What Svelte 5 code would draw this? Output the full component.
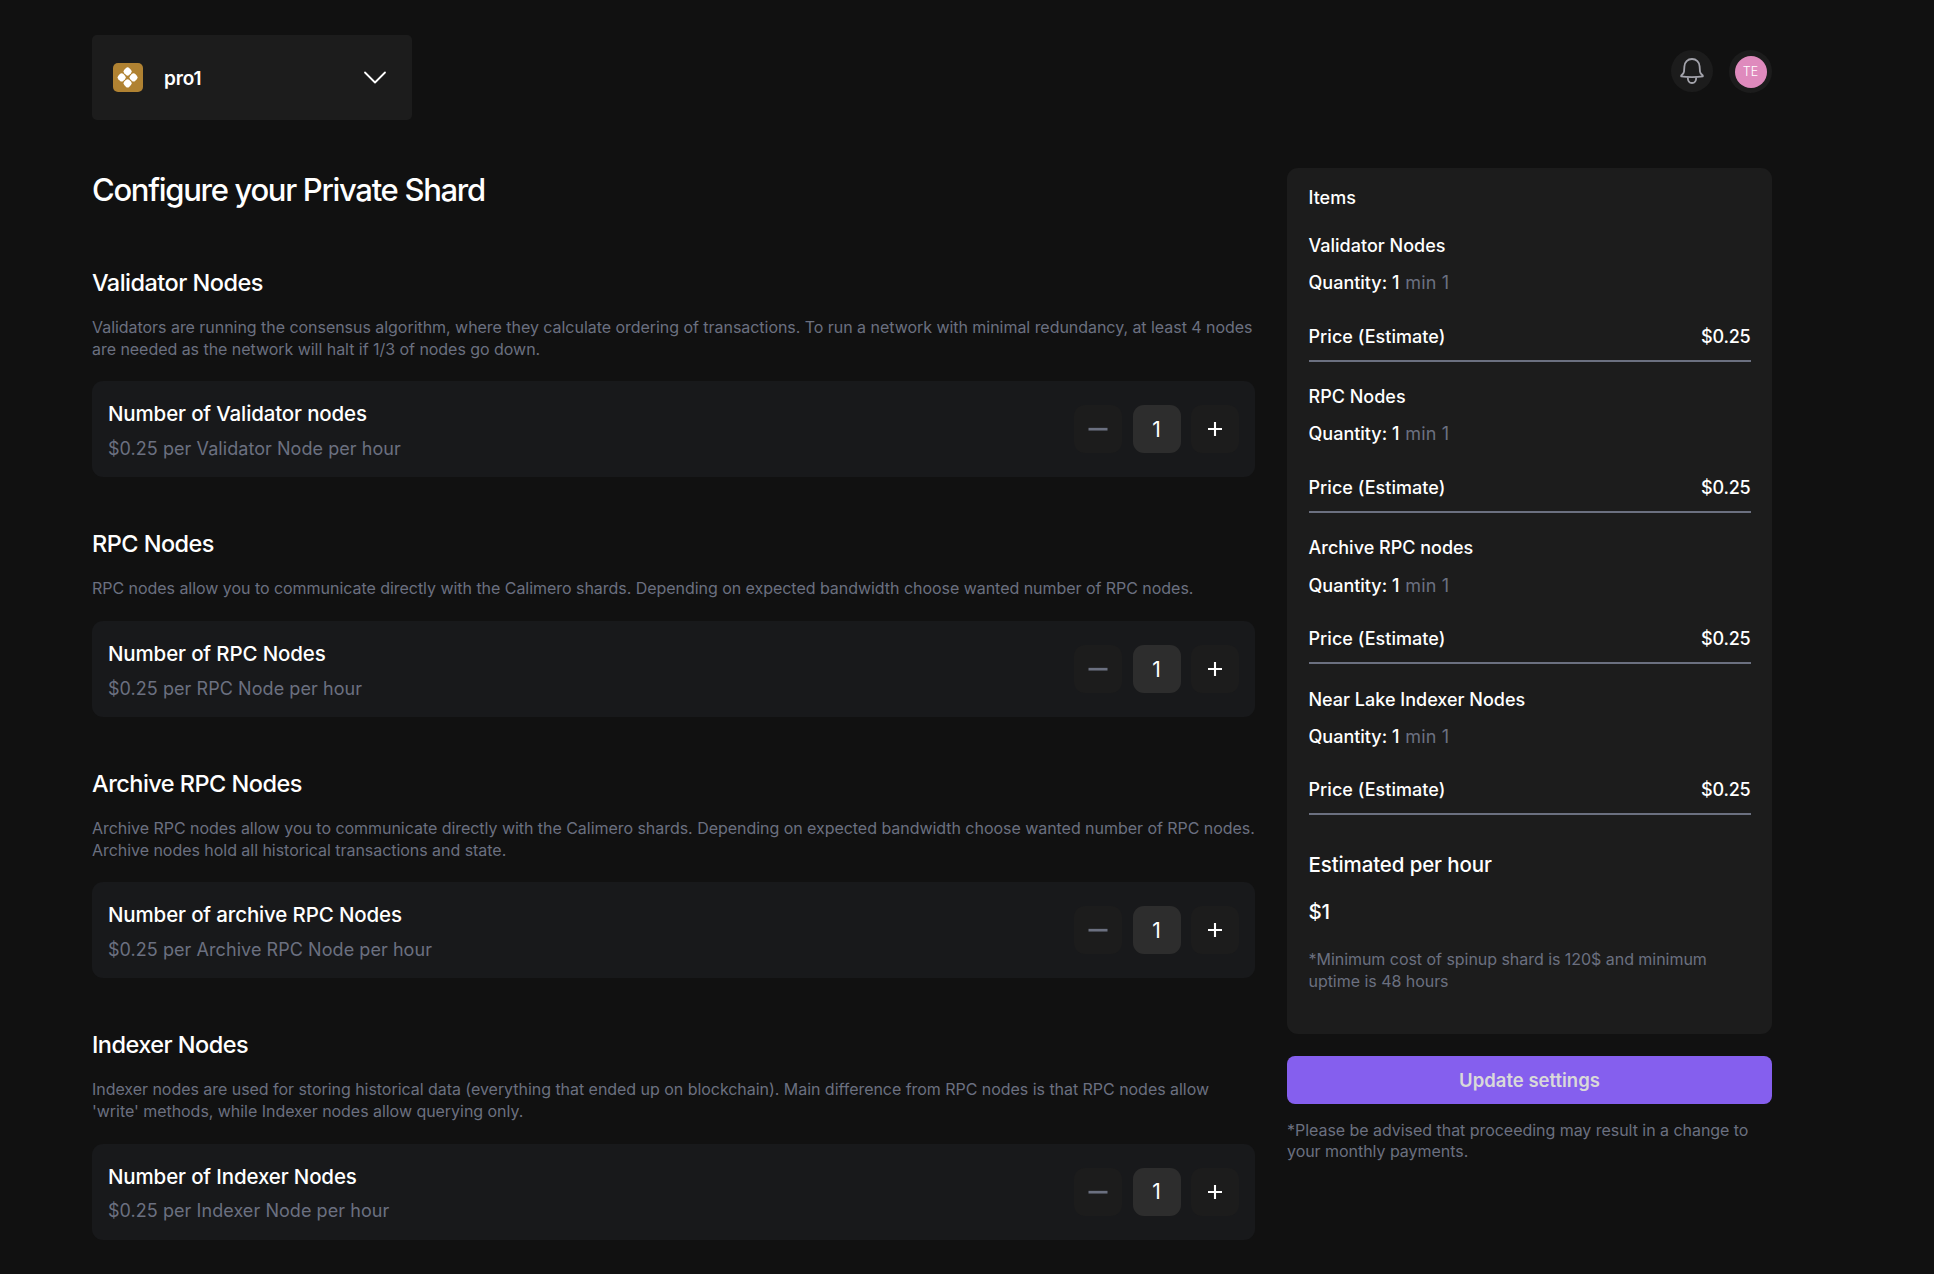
<script>
  const sections = [
    {
      title: 'Validator Nodes',
      text: 'Validators are running the consensus algorithm, where they calculate ordering of transactions. To run a network with minimal redundancy, at least 4 nodes are needed as the network will halt if 1/3 of nodes go down.',
      label: 'Number of Validator nodes',
      unit: 'Validator Node'
    },
    {
      title: 'RPC Nodes',
      text: 'RPC nodes allow you to communicate directly with the Calimero shards. Depending on expected bandwidth choose wanted number of RPC nodes.',
      label: 'Number of RPC Nodes',
      unit: 'RPC Node'
    },
    {
      title: 'Archive RPC Nodes',
      text: 'Archive RPC nodes allow you to communicate directly with the Calimero shards. Depending on expected bandwidth choose wanted number of RPC nodes. Archive nodes hold all historical transactions and state.',
      label: 'Number of archive RPC Nodes',
      unit: 'Archive RPC Node'
    },
    {
      title: 'Indexer Nodes',
      text: "Indexer nodes are used for storing historical data (everything that ended up on blockchain). Main difference from RPC nodes is that RPC nodes allow 'write' methods, while Indexer nodes allow querying only.",
      label: 'Number of Indexer Nodes',
      unit: 'Indexer Node'
    }
  ];
  const names = ['Validator Nodes', 'RPC Nodes', 'Archive RPC nodes', 'Near Lake Indexer Nodes'];
  const price = 0.25;
  const min = 1;
  let counts = $state([1, 1, 1, 1]);
  let total = $derived(counts.reduce((sum, n) => sum + n * price, 0));

  function change(i, by) {
    counts[i] = Math.max(min, counts[i] + by);
  }
</script>

<div class="page">
  <header>
    <button class="selector">
      <svg class="logo" viewBox="0 0 30 29">
        <rect width="30" height="29" rx="5" fill="#b08232" />
        <g fill="#fff" transform="translate(14.6 14.4) rotate(45)">
          <rect x="-7.8" y="-7.8" width="7.2" height="7.2" rx="2.5" />
          <rect x="0.6" y="-7.8" width="7.2" height="7.2" rx="2.5" />
          <rect x="-7.8" y="0.6" width="7.2" height="7.2" rx="2.5" />
          <rect x="0.6" y="0.6" width="7.2" height="7.2" rx="2.5" />
        </g>
      </svg>
      <span class="name">pro1</span>
      <svg class="chevron" viewBox="0 0 24 14">
        <path d="M2 1.5 12 11.5 22 1.5" fill="none" stroke="#fff" stroke-width="1.8" stroke-linecap="round" stroke-linejoin="round" />
      </svg>
    </button>
    <div class="actions">
      <button class="round" aria-label="Notifications">
        <svg class="bell" viewBox="0 0 24 26" fill="none" stroke="#a3a3ab" stroke-width="1.8" stroke-linejoin="round">
          <path d="M12 1C7.6 1 4.6 4.2 4.4 8.4L4 13.6C3.8 15.4 2.4 16.4 1.2 17.6V18.4C4 18.9 8 19.2 12 19.2S20 18.9 22.8 18.4V17.6C21.6 16.4 20.2 15.4 20 13.6L19.6 8.4C19.4 4.2 16.4 1 12 1Z" />
          <path d="M7.8 19.4C7.8 22.8 9.6 25 12 25S16.2 22.8 16.2 19.4" />
        </svg>
      </button>
      <div class="round"><span class="avatar">TE</span></div>
    </div>
  </header>

  <main>
    <div class="config">
      <h1>Configure your Private Shard</h1>
      {#each sections as s, i}
        <section>
          <h2>{s.title}</h2>
          <p class="note">{s.text}</p>
          <div class="card">
            <div class="info">
              <h3>{s.label}</h3>
              <p>${price} per {s.unit} per hour</p>
            </div>
            <div class="stepper">
              <button aria-label="Decrease" onclick={() => change(i, -1)}>
                <svg viewBox="0 0 20 20"><path d="M.5 10.2H19.5" stroke="#6b7080" stroke-width="2.7" /></svg>
              </button>
              <span class="count">{counts[i]}</span>
              <button aria-label="Increase" onclick={() => change(i, 1)}>
                <svg viewBox="0 0 20 20"><path d="M3 10H17M10 3V17" stroke="#fff" stroke-width="2.1" /></svg>
              </button>
            </div>
          </div>
        </section>
      {/each}
    </div>

    <aside>
      <div class="summary">
        <p class="heading">Items</p>
        {#each names as name, i}
          <div class="item">
            <p>{name}</p>
            <p class="quantity">Quantity: {counts[i]} <span>min {min}</span></p>
            <div class="price">
              <span>Price (Estimate)</span>
              <span class="amount">${counts[i] * price}</span>
            </div>
          </div>
        {/each}
        <p class="total">Estimated per hour</p>
        <p class="total sum">${total}</p>
        <p class="note">*Minimum cost of spinup shard is 120$ and minimum uptime is 48 hours</p>
      </div>
      <button class="update">Update settings</button>
      <p class="note advice">*Please be advised that proceeding may result in a change to your monthly payments.</p>
    </aside>
  </main>
</div>

<style>
  :global(body) {
    background: #111;
  }
  .page {
    box-sizing: border-box;
    width: 1934px;
    height: 1274px;
    overflow: hidden;
    padding: 35px 162px 0 92px;
    background: #111;
    color: #fff;
    font-family: Inter, 'Liberation Sans', sans-serif;
  }
  h1, h2, h3, p {
    margin: 0;
    font-weight: 500;
  }
  button {
    border: 0;
    padding: 0;
    font-family: inherit;
    color: inherit;
    cursor: pointer;
  }
  svg {
    display: block;
  }
  header {
    display: flex;
    justify-content: space-between;
    align-items: flex-start;
    height: 133px;
  }
  .selector {
    display: flex;
    align-items: center;
    width: 320px;
    height: 85px;
    padding: 0 25px 0 21px;
    border-radius: 5px;
    background: #1c1c1c;
  }
  .logo {
    width: 30px;
    height: 29px;
  }
  .name {
    flex: 1;
    margin-left: 21px;
    padding-top: 1px;
    text-align: left;
    font-size: 19px;
    font-weight: 600;
    letter-spacing: -0.1px;
  }
  .chevron {
    width: 24px;
    height: 14px;
  }
  .actions {
    display: flex;
    gap: 16px;
    padding-top: 15px;
  }
  .round {
    display: flex;
    align-items: center;
    justify-content: center;
    width: 43px;
    height: 43px;
    border-radius: 50%;
    background: #1c1c1c;
  }
  button.round {
    width: 42px;
    height: 42px;
  }
  .bell {
    width: 24px;
    height: 26px;
  }
  .avatar {
    width: 32px;
    height: 32px;
    border-radius: 50%;
    background: #df8abd;
    font-size: 12.5px;
    font-weight: 300;
    line-height: 32px;
    text-align: center;
  }
  main {
    display: grid;
    grid-template-columns: 1163px 485px;
    column-gap: 32px;
    align-items: start;
  }
  .config {
    padding-top: 2px;
  }
  h1 {
    font-size: 31px;
    line-height: 40px;
    letter-spacing: -1.3px;
    margin-bottom: 57.5px;
  }
  section {
    margin-bottom: 51.5px;
  }
  h2 {
    font-size: 23.5px;
    line-height: 30px;
    letter-spacing: -0.53px;
    margin-bottom: 19.6px;
  }
  .note {
    color: #6b7080;
    font-size: 16px;
    font-weight: 400;
    line-height: 21.5px;
    letter-spacing: -0.04px;
  }
  section .note {
    margin-right: -5px;
  }
  .card {
    box-sizing: border-box;
    display: flex;
    justify-content: space-between;
    align-items: flex-start;
    height: 96px;
    margin-top: 21.2px;
    padding: 0 16px;
    border-radius: 11px;
    background: #18191b;
  }
  .info {
    padding-top: 20px;
  }
  h3 {
    font-size: 20.5px;
    line-height: 26px;
    letter-spacing: -0.145px;
  }
  .info p {
    margin-top: 9.5px;
    color: #6b7080;
    font-size: 18px;
    font-weight: 400;
    line-height: 24px;
    letter-spacing: 0.06px;
  }
  .stepper {
    display: flex;
    gap: 10.5px;
    padding-top: 24px;
  }
  .stepper button,
  .count {
    display: flex;
    align-items: center;
    justify-content: center;
    width: 48px;
    height: 48px;
    border-radius: 11px;
    background: #1c1c1c;
  }
  .stepper .count {
    background: #2d2d2d;
    font-size: 21px;
  }
  .stepper svg {
    width: 20px;
    height: 20px;
  }
  .summary {
    box-sizing: border-box;
    height: 865.7px;
    padding: 17.5px 21.5px 0;
    border-radius: 11px;
    background: #1c1c1c;
    font-size: 18px;
    line-height: 24px;
  }
  .heading {
    margin-bottom: 24.5px;
  }
  .item {
    border-bottom: 2px solid #6b7080;
    padding-bottom: 11.3px;
    margin-bottom: 23.3px;
    font-weight: 500;
  }
  .quantity {
    margin: 13.2px 0 29.4px;
  }
  .quantity span {
    margin-left: 1px;
    color: #6b7080;
    font-weight: 400;
    letter-spacing: 0.2px;
  }
  .price {
    display: flex;
    justify-content: space-between;
    letter-spacing: 0.05px;
  }
  .amount {
    letter-spacing: -0.2px;
  }
  .total {
    margin-top: 36.5px;
    font-size: 20.5px;
    line-height: 26px;
    letter-spacing: -0.12px;
  }
  .sum {
    margin: 21.5px 0 23.8px;
  }
  .update {
    width: 100%;
    height: 48px;
    margin-top: 22.3px;
    border-radius: 8px;
    background: #855fee;
    color: #d9d9d9;
    font-size: 18.5px;
    font-weight: 600;
  }
  .advice {
    margin-top: 16px;
  }
</style>
